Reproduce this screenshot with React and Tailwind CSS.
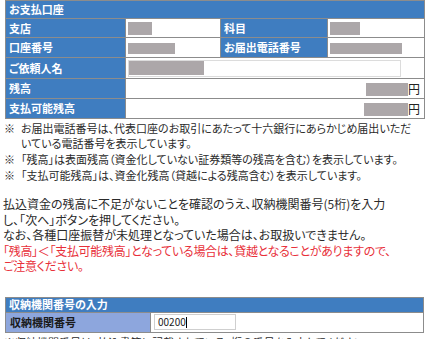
import React from 'react';

const font = "font-['Noto_Sans_CJK_JP',sans-serif] [font-feature-settings:'palt']";

const Label = ({ children, className = '' }) => (
  <td className={`bg-[#3f7dc0] text-white font-bold text-[11px] leading-[13px] p-0 pl-[3px] border border-[#8c8c8c] ${className}`}>
    {children}
  </td>
);

const Mask = ({ w, h = 13 }) => (
  <span className="inline-block bg-[#aca7a9] align-middle" style={{ width: w, height: h }} />
);

const Value = ({ children, colSpan, className = '' }) => (
  <td colSpan={colSpan} className={`bg-white border border-[#8c8c8c] p-0 pl-[2px] text-[11px] leading-[13px] ${className}`}>
    {children}
  </td>
);

export default function App() {
  return (
    <div className={`w-[431px] h-[339px] overflow-hidden bg-white text-[#222] ${font}`}>
      <table className="ml-[5px] w-[419px] border-collapse border border-[#8c8c8c] table-fixed">
        <colgroup>
          <col className="w-[120px]" />
          <col className="w-[95px]" />
          <col className="w-[107px]" />
          <col className="w-[97px]" />
        </colgroup>
        <tbody>
          <tr className="h-[18px]">
            <td colSpan={4} className="bg-[#3f7dc0] text-white font-bold text-[11px] leading-[13px] p-0 pl-[3px] border border-[#8c8c8c]">
              お支払口座
            </td>
          </tr>
          <tr className="h-[19px]">
            <Label>支店</Label>
            <Value><Mask w={24} /></Value>
            <Label>科目</Label>
            <Value className="pl-0"><Mask w={30} /></Value>
          </tr>
          <tr className="h-[20px]">
            <Label>口座番号</Label>
            <Value><Mask w={47} h={11} /></Value>
            <Label>お届出電話番号</Label>
            <Value className="pl-0"><Mask w={72} h={11} /></Value>
          </tr>
          <tr className="h-[21px]">
            <Label>ご依頼人名</Label>
            <Value colSpan={3}>
              <div className="w-[273px] h-[17px] border border-[#dcdcdc] flex items-center">
                <Mask w={75} h={14} />
              </div>
            </Value>
          </tr>
          <tr className="h-[20px]">
            <Label>残高</Label>
            <Value colSpan={3} className="text-right pr-[4px]">
              <Mask w={42} />
              <span className="text-[12px] align-middle leading-none">円</span>
            </Value>
          </tr>
          <tr className="h-[20px]">
            <Label>支払可能残高</Label>
            <Value colSpan={3} className="text-right pr-[4px]">
              <Mask w={44} />
              <span className="text-[12px] align-middle leading-none">円</span>
            </Value>
          </tr>
        </tbody>
      </table>

      <div className="pl-[4px] pt-[2px] text-[11px] leading-[15px] text-[#2a2a2a] whitespace-nowrap">
        <div className="flex">
          <span className="w-[17px] shrink-0">※</span>
          <span>
            お届出電話番号は、代表口座のお取引にあたって十六銀行にあらかじめ届出いただ
            <br />
            いている電話番号を表示しています。
          </span>
        </div>
        <div className="flex mt-px">
          <span className="w-[17px] shrink-0">※</span>
          <span>「残高」は表面残高（資金化していない証券類等の残高を含む）を表示しています。</span>
        </div>
        <div className="flex mt-px">
          <span className="w-[17px] shrink-0">※</span>
          <span>「支払可能残高」は、資金化残高（貸越による残高含む）を表示しています。</span>
        </div>
      </div>

      <div className="pl-[3px] mt-[13px] text-[12px] leading-[15.5px] text-[#2a2a2a] whitespace-nowrap">
        <p>
          払込資金の残高に不足がないことを確認のうえ、収納機関番号(5桁)を入力
          <br />
          し、「次へ」ボタンを押してください。
        </p>
        <p>なお、各種口座振替が未処理となっていた場合は、お取扱いできません。</p>
        <p className="text-[#e8303a] tracking-[-0.3px]">
          「残高」＜「支払可能残高」となっている場合は、貸越となることがありますので、
          <br />
          ご注意ください。
        </p>
      </div>

      <table className="ml-[5px] mt-[23px] w-[419px] border-collapse border border-[#8c8c8c] table-fixed">
        <colgroup>
          <col className="w-[145px]" />
          <col />
        </colgroup>
        <tbody>
          <tr className="h-[15px]">
            <td colSpan={2} className="bg-[#3f7dc0] text-white font-bold text-[11px] leading-[13px] p-0 pl-[3px] border border-[#8c8c8c]">
              収納機関番号の入力
            </td>
          </tr>
          <tr className="h-[20px]">
            <td className="bg-[#8da6dd] text-[#1a1a1a] font-bold text-[11px] leading-[13px] p-0 pl-[4px] border border-[#8c8c8c]">
              収納機関番号
            </td>
            <td className="bg-white border border-[#8c8c8c] p-0 pl-[3px]">
              <div className="w-[82px] h-[16px] border border-[#cfcfcf] flex items-center pl-[3px] text-[10px] leading-none text-[#222]">
                00200<span className="inline-block w-px h-[11px] bg-black" />
              </div>
            </td>
          </tr>
        </tbody>
      </table>
      <div className="pl-[4px] mt-[3px] text-[11px] leading-[13px] text-[#2a2a2a] whitespace-nowrap">
        ※収納機関番号は、払込書等に記載されている5桁の番号を入力してください。
      </div>
    </div>
  );
}
